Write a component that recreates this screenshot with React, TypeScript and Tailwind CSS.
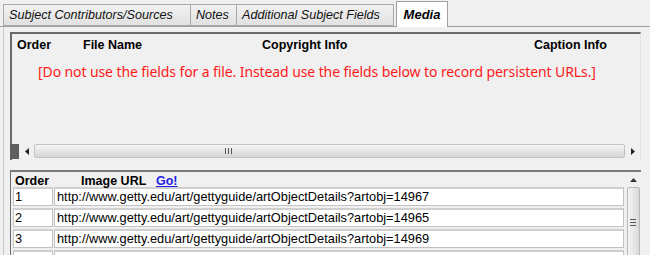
import React from "react";

const urls = [
  "http://www.getty.edu/art/gettyguide/artObjectDetails?artobj=14967",
  "http://www.getty.edu/art/gettyguide/artObjectDetails?artobj=14965",
  "http://www.getty.edu/art/gettyguide/artObjectDetails?artobj=14969",
  "",
];

export default function App() {
  return (
    <div
      className="w-[650px] h-[255px] bg-[#f0f0f0] overflow-hidden"
      style={{ fontFamily: '"Liberation Sans", Arial, sans-serif' }}
    >
      {/* tab strip */}
      <div className="flex items-end h-[27px] pl-[3px] border-b border-[#a0a0a0]">
        <div className="flex items-end">
          <div className="w-[188px] h-[22px] border border-[#a9a9a9] bg-gradient-to-b from-[#f2f2f2] to-[#e1e1e1] flex items-center pl-[5px] italic text-[12.6px] text-[#111]">
            Subject Contributors/Sources
          </div>
          <div className="w-[46px] h-[22px] border border-l-0 border-[#a9a9a9] bg-gradient-to-b from-[#f2f2f2] to-[#e1e1e1] flex items-center pl-[5px] italic text-[12.6px] text-[#111]">
            Notes
          </div>
          <div className="w-[157px] h-[22px] border border-l-0 border-[#a9a9a9] bg-gradient-to-b from-[#f2f2f2] to-[#e1e1e1] flex items-center pl-[5px] italic text-[12.6px] text-[#111]">
            Additional Subject Fields
          </div>
          <div className="w-[52px] h-[26px] -mb-px ml-[2px] border border-[#a0a0a0] border-b-0 bg-white flex items-center justify-center italic font-bold text-[13px] text-black">
            Media
          </div>
        </div>
      </div>

      {/* page body */}
      <div className="border-l border-[#c8c8c8] ml-[3px] h-[228px] pt-[5px] pl-[6px] pr-[9px]">
        {/* file panel */}
        <div className="h-[128px] flex flex-col border-t-2 border-l-2 border-[#6a6a6a] border-r border-r-[#e2e2e2] bg-[#f0f0f0]">
          <div className="relative h-[16px] shrink-0 text-[12.5px] font-bold text-black">
            <span className="absolute left-[5px] top-[2px]">Order</span>
            <span className="absolute left-[71px] top-[2px]">File Name</span>
            <span className="absolute left-[250px] top-[2px]">Copyright Info</span>
            <span className="absolute left-[522px] top-[2px]">Caption Info</span>
          </div>
          <div
            className="pl-[26px] pt-[11px] text-[14px] text-[#ff1a1a] tracking-[-0.1px]"
            style={{ fontFamily: '"Noto Sans", "Open Sans", sans-serif' }}
          >
            [Do not use the fields for a file. Instead use the fields below to record persistent URLs.]
          </div>
          <div className="flex-1" />
          {/* horizontal scrollbar */}
          <div className="h-[16px] shrink-0 flex items-center mb-[1px] -ml-[2px]">
            <div className="w-[9px] h-[15px] bg-[#5f5f5f]" />
            <div className="w-[15px] h-[15px] flex items-center justify-center">
              <svg width="4" height="7" viewBox="0 0 4 7">
                <path d="M4 0 L0 3.5 L4 7 Z" fill="#222" />
              </svg>
            </div>
            <div className="flex-1 h-[15px] flex items-center">
              <div className="flex-1 h-[14px] rounded-[2px] border border-[#c4c4c4] bg-gradient-to-b from-[#f4f4f4] via-[#e6e6e6] to-[#d6d6d6] flex items-center justify-start pl-[190px]">
                <svg width="7" height="6" viewBox="0 0 7 6">
                  <path d="M0.5 0 V6 M3.5 0 V6 M6.5 0 V6" stroke="#555" strokeWidth="1" />
                </svg>
              </div>
            </div>
            <div className="w-[15px] h-[15px] flex items-center justify-center">
              <svg width="4" height="7" viewBox="0 0 4 7">
                <path d="M0 0 L4 3.5 L0 7 Z" fill="#222" />
              </svg>
            </div>
          </div>
        </div>

        {/* url panel */}
        <div className="mt-[10px] h-[100px] flex border-t-2 border-l border-[#6a6a6a] border-t-[#7a7a7a] bg-[#f0f0f0]">
          <div className="flex-1 flex flex-col">
            <div className="relative h-[15px] shrink-0 text-[12.5px] font-bold text-black">
              <span className="absolute left-[4px] top-0">Order</span>
              <span className="absolute left-[70px] top-0">Image URL</span>
              <span className="absolute left-[145px] top-0 text-[#1f1fe6] underline">Go!</span>
            </div>
            <div className="flex flex-col gap-[2px] pl-[2px] pr-[1px] shrink-0">
              {urls.map((u, i) => (
                <div key={i} className="flex gap-[1px] h-[19px] shrink-0">
                  <div className="w-[40px] h-[19px] bg-white border border-[#c2c2c2] border-t-2 border-t-[#cfcfcf] flex items-center pl-[1px] text-[12.8px] text-black leading-none">
                    {u ? i + 1 : ""}
                  </div>
                  <div className="flex-1 h-[19px] bg-white border border-[#c2c2c2] border-t-2 border-t-[#cfcfcf] flex items-center pl-[2px] text-[12.8px] text-black leading-none">
                    {u}
                  </div>
                </div>
              ))}
            </div>
          </div>
          {/* vertical scrollbar */}
          <div className="w-[16px] flex flex-col items-center">
            <div className="h-[15px] shrink-0 w-full flex items-center justify-center">
              <svg width="7" height="4" viewBox="0 0 7 4">
                <path d="M0 4 L3.5 0 L7 4 Z" fill="#333" />
              </svg>
            </div>
            <div className="flex-1 w-[13px] rounded-[2px] border border-[#b8b8b8] bg-gradient-to-r from-[#f4f4f4] via-[#e8e8e8] to-[#d8d8d8] flex items-start justify-center pt-[31px]">
              <svg width="6" height="7" viewBox="0 0 6 7">
                <path d="M0 0.5 H6 M0 3.5 H6 M0 6.5 H6" stroke="#555" strokeWidth="1" />
              </svg>
            </div>
          </div>
        </div>
      </div>
    </div>
  );
}
